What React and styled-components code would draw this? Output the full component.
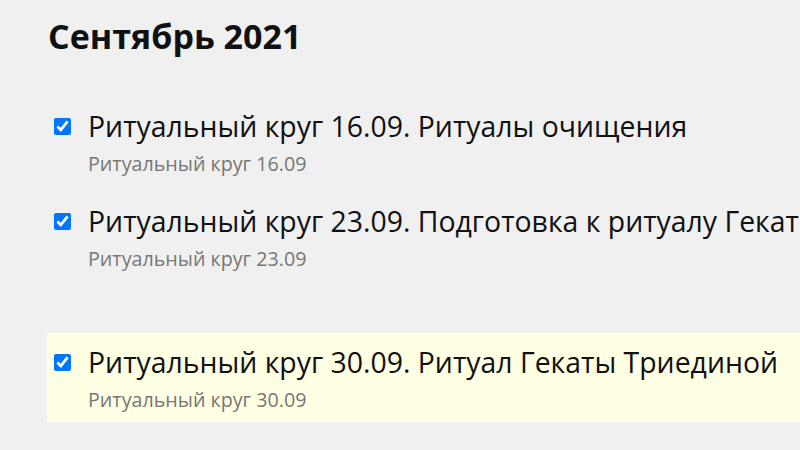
import React from 'react';
import styled, { createGlobalStyle } from 'styled-components';

const GlobalStyle = createGlobalStyle`
  html, body {
    margin: 0;
    padding: 0;
    background: #f0f0f0;
    overflow: hidden;
  }
  body {
    font-family: "Open Sans", "Noto Sans", sans-serif;
  }
`;

const Page = styled.div`
  box-sizing: border-box;
  width: 800px;
  height: 450px;
  padding: 16px 0 0 48px;
  overflow: hidden;
`;

const MonthTitle = styled.h2`
  margin: 0 0 41px;
  font-size: 34px;
  line-height: 40px;
  font-weight: 700;
  color: #111111;
`;

const List = styled.div`
  display: flex;
  flex-direction: column;
  gap: 6px;
`;

const Item = styled.div`
  display: flex;
  align-items: flex-start;
  gap: 17px;
  box-sizing: border-box;
  height: 89px;
  width: 1000px;
  margin-left: -1px;
  padding: 10px 7px 9px;
  margin-top: ${(p) => (p.$spaced ? '46px' : '0')};
  background: ${(p) => (p.$current ? '#ffffe3' : 'transparent')};
`;

const Check = styled.input`
  flex: none;
  width: 17px;
  height: 17px;
  margin: 11px 0 0;
  accent-color: #0075ff;
`;

const Texts = styled.div`
  display: flex;
  flex-direction: column;
  white-space: nowrap;
`;

const ItemTitle = styled.div`
  font-size: 28.4px;
  line-height: 38px;
  color: #111111;
`;

const ItemSub = styled.div`
  margin-top: 6px;
  font-size: 19.7px;
  line-height: 26px;
  color: #777777;
`;

const items = [
  { title: 'Ритуальный круг 16.09. Ритуалы очищения', sub: 'Ритуальный круг 16.09' },
  { title: 'Ритуальный круг 23.09. Подготовка к ритуалу Гекаты', sub: 'Ритуальный круг 23.09' },
  { title: 'Ритуальный круг 30.09. Ритуал Гекаты Триединой', sub: 'Ритуальный круг 30.09', current: true, spaced: true },
];

export default function App() {
  return (
    <>
      <GlobalStyle />
      <Page>
        <MonthTitle>Сентябрь 2021</MonthTitle>
        <List>
          {items.map((it) => (
            <Item key={it.sub} $current={it.current} $spaced={it.spaced}>
              <Check type="checkbox" checked readOnly />
              <Texts>
                <ItemTitle>{it.title}</ItemTitle>
                <ItemSub>{it.sub}</ItemSub>
              </Texts>
            </Item>
          ))}
        </List>
      </Page>
    </>
  );
}
